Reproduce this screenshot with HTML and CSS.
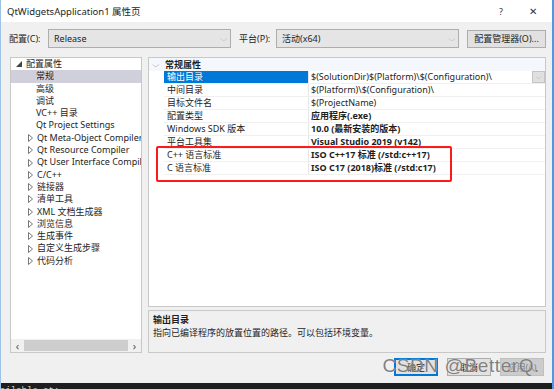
FILE: index.html
```html
<!DOCTYPE html>
<html lang="zh-CN">
<head>
  <meta charset="UTF-8">
  <title>QtWidgetsApplication1 属性页</title>
  <link rel="stylesheet" href="styles.css">
</head>
<body>
  <div class="window">
    <div class="titlebar">
      <span class="title">QtWidgetsApplication1 属性页</span>
      <span class="ctrl help">?</span>
      <span class="ctrl close">&#x2715;</span>
    </div>

    <div class="body">
      <div class="toolbar">
        <span class="lbl">配置(C):</span>
        <div class="combo"><span>Release</span><span class="chev">&#x2335;</span></div>
        <span class="lbl lbl-platform">平台(P):</span>
        <div class="combo"><span>活动(x64)</span><span class="chev">&#x2335;</span></div>
        <button class="btn btn-manager">配置管理器(O)...</button>
      </div>

      <div class="main">
        <div class="tree">
          <div class="tree-items">
            <div class="node root"><svg class="tri" width="6" height="6" viewBox="0 0 6 6"><path d="M6 0 L6 6 L0 6 Z" fill="#444"/></svg>配置属性</div>
            <div class="node leaf selected">常规</div>
            <div class="node leaf">高级</div>
            <div class="node leaf">调试</div>
            <div class="node leaf">VC++ 目录</div>
            <div class="node leaf">Qt Project Settings</div>
            <div class="node"><svg class="tri" width="5" height="8" viewBox="0 0 5 8"><path d="M0.5 0.5 L4.5 4 L0.5 7.5 Z" fill="none" stroke="#777" stroke-width="1"/></svg>Qt Meta-Object Compiler</div>
            <div class="node"><svg class="tri" width="5" height="8" viewBox="0 0 5 8"><path d="M0.5 0.5 L4.5 4 L0.5 7.5 Z" fill="none" stroke="#777" stroke-width="1"/></svg>Qt Resource Compiler</div>
            <div class="node"><svg class="tri" width="5" height="8" viewBox="0 0 5 8"><path d="M0.5 0.5 L4.5 4 L0.5 7.5 Z" fill="none" stroke="#777" stroke-width="1"/></svg>Qt User Interface Compile</div>
            <div class="node"><svg class="tri" width="5" height="8" viewBox="0 0 5 8"><path d="M0.5 0.5 L4.5 4 L0.5 7.5 Z" fill="none" stroke="#777" stroke-width="1"/></svg>C/C++</div>
            <div class="node"><svg class="tri" width="5" height="8" viewBox="0 0 5 8"><path d="M0.5 0.5 L4.5 4 L0.5 7.5 Z" fill="none" stroke="#777" stroke-width="1"/></svg>链接器</div>
            <div class="node"><svg class="tri" width="5" height="8" viewBox="0 0 5 8"><path d="M0.5 0.5 L4.5 4 L0.5 7.5 Z" fill="none" stroke="#777" stroke-width="1"/></svg>清单工具</div>
            <div class="node"><svg class="tri" width="5" height="8" viewBox="0 0 5 8"><path d="M0.5 0.5 L4.5 4 L0.5 7.5 Z" fill="none" stroke="#777" stroke-width="1"/></svg>XML 文档生成器</div>
            <div class="node"><svg class="tri" width="5" height="8" viewBox="0 0 5 8"><path d="M0.5 0.5 L4.5 4 L0.5 7.5 Z" fill="none" stroke="#777" stroke-width="1"/></svg>浏览信息</div>
            <div class="node"><svg class="tri" width="5" height="8" viewBox="0 0 5 8"><path d="M0.5 0.5 L4.5 4 L0.5 7.5 Z" fill="none" stroke="#777" stroke-width="1"/></svg>生成事件</div>
            <div class="node"><svg class="tri" width="5" height="8" viewBox="0 0 5 8"><path d="M0.5 0.5 L4.5 4 L0.5 7.5 Z" fill="none" stroke="#777" stroke-width="1"/></svg>自定义生成步骤</div>
            <div class="node"><svg class="tri" width="5" height="8" viewBox="0 0 5 8"><path d="M0.5 0.5 L4.5 4 L0.5 7.5 Z" fill="none" stroke="#777" stroke-width="1"/></svg>代码分析</div>
          </div>
          <div class="hscroll">
            <span class="arrow">&lsaquo;</span>
            <span class="thumb"></span>
            <span class="arrow">&rsaquo;</span>
          </div>
        </div>

        <div class="right">
          <div class="grid">
            <div class="group"><span class="group-chev">&#x2335;</span>常规属性</div>
            <div class="row selected">
              <div class="name">输出目录</div>
              <div class="value">$(SolutionDir)$(Platform)\$(Configuration)\<span class="drop">&#x2335;</span></div>
            </div>
            <div class="row">
              <div class="name">中间目录</div>
              <div class="value">$(Platform)\$(Configuration)\</div>
            </div>
            <div class="row">
              <div class="name">目标文件名</div>
              <div class="value">$(ProjectName)</div>
            </div>
            <div class="row">
              <div class="name">配置类型</div>
              <div class="value bold">应用程序(.exe)</div>
            </div>
            <div class="row">
              <div class="name">Windows SDK 版本</div>
              <div class="value bold">10.0 (最新安装的版本)</div>
            </div>
            <div class="row">
              <div class="name">平台工具集</div>
              <div class="value bold">Visual Studio 2019 (v142)</div>
            </div>
            <div class="row">
              <div class="name">C++ 语言标准</div>
              <div class="value bold">ISO C++17 标准 (/std:c++17)</div>
            </div>
            <div class="row">
              <div class="name">C 语言标准</div>
              <div class="value bold">ISO C17 (2018)标准 (/std:c17)</div>
            </div>
            <div class="highlight"></div>
          </div>
          <div class="desc">
            <div class="desc-title">输出目录</div>
            <div class="desc-text">指向已编译程序的放置位置的路径。可以包括环境变量。</div>
          </div>
        </div>
      </div>

      <div class="buttons">
        <button class="btn btn-ok">确定</button>
        <button class="btn">取消</button>
        <button class="btn btn-disabled">应用(A)</button>
        <span class="watermark">CSDN @BetterQ.</span>
      </div>
    </div>

    <div class="console">ailable at:</div>
  </div>
</body>
</html>
```

FILE: styles.css
```css
* {
  box-sizing: border-box;
}
body {
  margin: 0;
  font-family: "Noto Sans", "Noto Sans CJK SC", sans-serif;
  font-size: 9px;
  color: #1e1e1e;
  background: #1e1e1e;
}
.window {
  width: 554px;
  height: 389px;
  display: flex;
  flex-direction: column;
  background: #f0f0f0;
  border-left: 1px solid #9cc3e6;
  border-right: 2px solid #4a9be0;
  overflow: hidden;
}
.titlebar {
  height: 22px;
  flex: none;
  display: flex;
  align-items: center;
  background: #fff;
  padding-left: 6px;
  font-size: 9.5px;
}
.title {
  flex: 1;
}
.ctrl {
  width: 32px;
  text-align: center;
  color: #333;
}
.help {
  font-size: 9px;
}
.close {
  font-size: 10px;
  margin-right: 3px;
}
.body {
  flex: 1;
  display: flex;
  flex-direction: column;
  padding: 7px 6px 0 8px;
}
.toolbar {
  height: 19px;
  display: flex;
  align-items: center;
}
.lbl {
  width: 39px;
}
.lbl-platform {
  margin-left: 8px;
  width: 37px;
}
.combo {
  width: 183px;
  height: 19px;
  display: flex;
  align-items: center;
  justify-content: space-between;
  padding: 0 4px 0 5px;
  background: #e5e5e5;
  border: 1px solid #adadad;
}
.chev {
  color: #888;
  font-size: 7px;
  transform: scaleX(1.4);
}
.btn {
  font: inherit;
  font-size: 9px;
  color: #1e1e1e;
  background: #e1e1e1;
  border: 1px solid #adadad;
  padding: 0;
}
.btn-manager {
  margin-left: 8px;
  width: 79px;
  height: 18px;
}
.main {
  display: flex;
  margin-top: 9px;
  height: 296px;
}
.tree {
  width: 132px;
  margin-left: 1px;
  background: #fff;
  border: 1px solid #c8c8c8;
  display: flex;
  flex-direction: column;
}
.tree-items {
  flex: 1;
  overflow: hidden;
  white-space: nowrap;
}
.node {
  height: 12.3px;
  line-height: 12.3px;
  padding-left: 17px;
  display: flex;
  align-items: center;
}
.node.root {
  padding-left: 5px;
}
.node.leaf {
  padding-left: 25px;
}
.node.selected {
  background: #cfd0dc;
}
.tri {
  flex: none;
  margin-right: 4px;
}
.hscroll {
  height: 13px;
  display: flex;
  align-items: center;
  background: #f0f0f0;
  color: #555;
  font-size: 11px;
}
.arrow {
  width: 13px;
  text-align: center;
  line-height: 13px;
}
.thumb {
  flex: 1;
  height: 11px;
  background: #cdcdcd;
}
.right {
  margin-left: 6px;
  width: 400px;
  display: flex;
  flex-direction: column;
}
.grid {
  position: relative;
  height: 250px;
  background: #fff;
  border: 1px solid #c8c8c8;
}
.group {
  height: 13px;
  display: flex;
  align-items: center;
  font-weight: bold;
  background: #f4f7fb;
  padding-left: 5px;
}
.group-chev {
  font-weight: normal;
  font-size: 7px;
  width: 11px;
  color: #444;
  transform: scaleX(1.4);
}
.row {
  display: flex;
  height: 13px;
  margin-left: 15px;
  border-bottom: 1px solid #f0f0f0;
}
.name {
  width: 145px;
  padding-left: 3px;
  line-height: 12px;
  border-right: 1px solid #e6e6e6;
  white-space: nowrap;
}
.value {
  flex: 1;
  padding-left: 2px;
  line-height: 12px;
  white-space: nowrap;
  display: flex;
}
.bold {
  font-weight: bold;
}
.row.selected .name {
  background: #0078d7;
  color: #fff;
}
.drop {
  margin-left: auto;
  width: 13px;
  height: 12px;
  background: #e0e0e0;
  border: 1px solid #c4c4c4;
  color: #777;
  font-size: 7px;
  text-align: center;
  line-height: 10px;
}
.highlight {
  position: absolute;
  left: 7px;
  top: 88px;
  width: 296px;
  height: 36px;
  border: 2px solid #ff1a1a;
  border-radius: 2px;
}
.desc {
  margin-top: 3px;
  height: 43px;
  border: 1px solid #c8c8c8;
  padding: 2px 4px;
}
.desc-title {
  font-weight: bold;
  line-height: 13px;
}
.desc-text {
  line-height: 14px;
}
.buttons {
  position: relative;
  display: flex;
  justify-content: flex-end;
  gap: 9px;
  margin-top: 5px;
  padding-right: 2px;
}
.buttons .btn {
  width: 44px;
  height: 18px;
}
.btn-ok {
  border-color: #0078d7;
  box-shadow: inset 0 0 0 1px #0078d7;
}
.btn-disabled {
  background: #cccccc;
  border-color: #bfbfbf;
  color: #838383;
}
.watermark {
  position: absolute;
  right: 6px;
  top: -3px;
  font-family: "Liberation Sans", sans-serif;
  font-size: 19px;
  color: rgba(95, 95, 95, 0.8);
  letter-spacing: 0.6px;
  text-shadow: 0 0 1px rgba(255, 255, 255, 0.9);
  pointer-events: none;
}
.console {
  height: 6px;
  flex: none;
  background: #1e1e1e;
  color: #c8c8c8;
  font-family: "Liberation Mono", monospace;
  font-size: 9px;
  line-height: 16px;
  margin-left: -1px;
  overflow: hidden;
}
```
